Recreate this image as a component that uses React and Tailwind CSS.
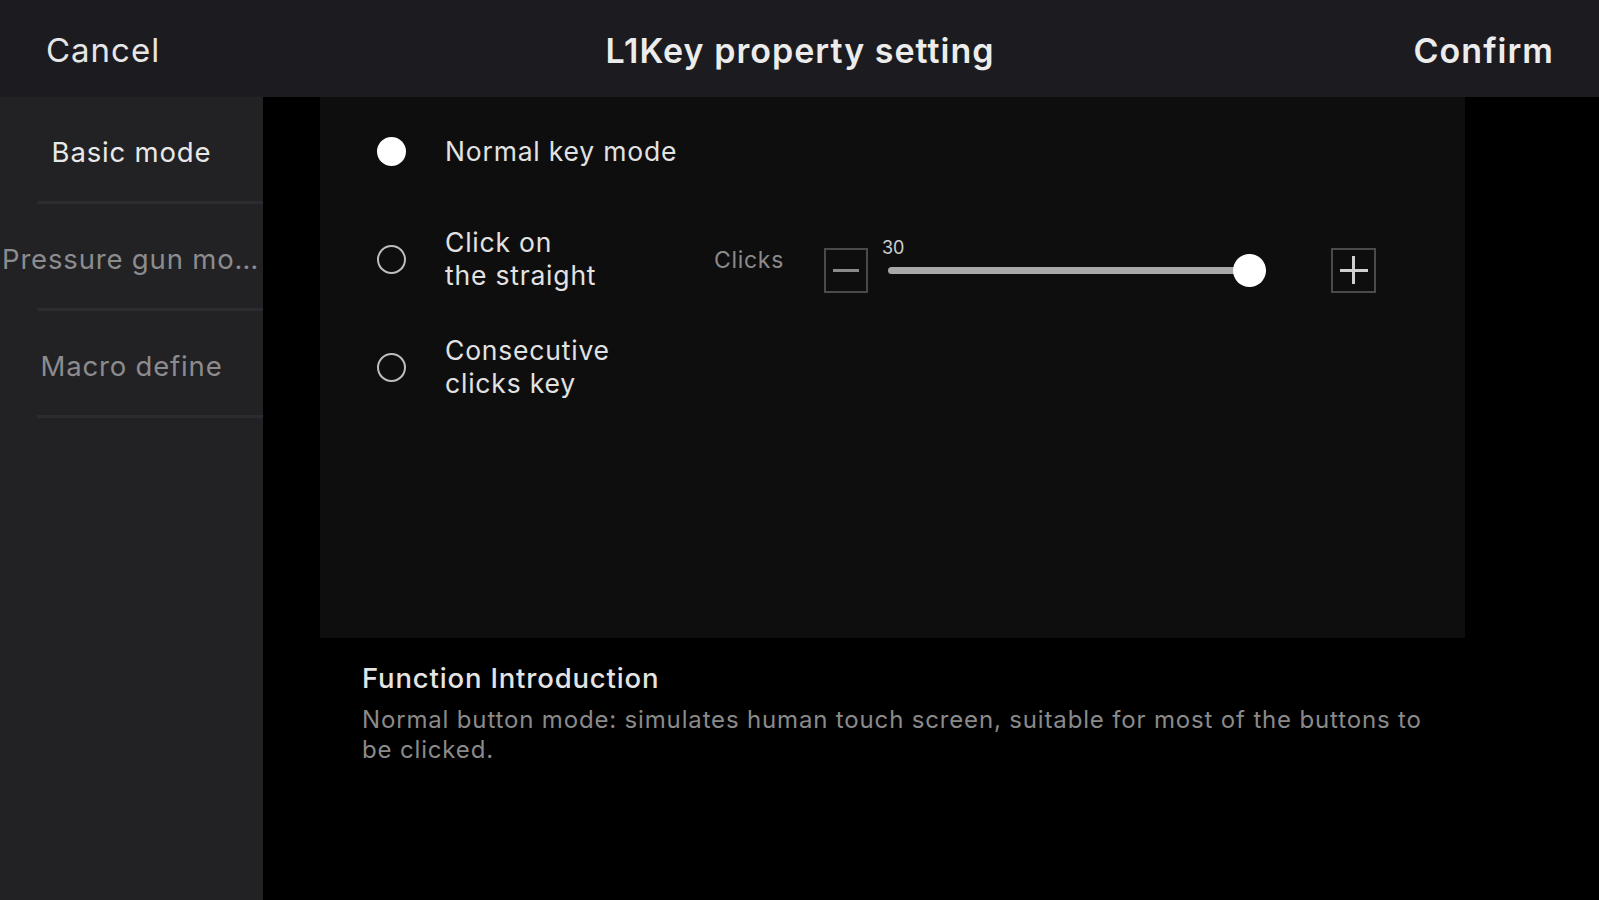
import React, { useState } from 'react';

const modes = [
    { id: 'normal', label: ['Normal key mode'] },
    { id: 'straight', label: ['Click on', 'the straight'] },
    { id: 'consecutive', label: ['Consecutive', 'clicks key'] },
];

const tabs = ['Basic mode', 'Pressure gun mode', 'Macro define'];

const Radio = ({ checked }) => (
    <div className="w-[30px] h-[30px] flex items-center justify-center shrink-0">
        {checked ? (
            <div className="w-[29px] h-[29px] rounded-full bg-white" />
        ) : (
            <div className="w-[29px] h-[29px] rounded-full border-[2.5px] border-[#bdbdbd]" />
        )}
    </div>
);

const App = () => {
    const [mode, setMode] = useState('normal');
    const [tab, setTab] = useState(0);
    const [clicks, setClicks] = useState(30);

    return (
        <div className="w-[1599px] h-[900px] bg-black flex flex-col overflow-hidden" style={{ fontFamily: 'Inter, "Noto Sans", sans-serif' }}>
            {/* Header */}
            <div className="h-[97px] shrink-0 bg-[#1c1c20] grid grid-cols-[1fr_auto_1fr] items-center pl-[46px] pr-[45px] pt-[4px]">
                <button className="justify-self-start text-[33px] text-[#e6e6e6] tracking-[0.03em]">Cancel</button>
                <h1 className="text-[34px] font-semibold text-[#ececec] tracking-[0.03em]">L1Key property setting</h1>
                <button className="justify-self-end text-[34px] font-semibold text-[#ececec] tracking-[0.03em]">Confirm</button>
            </div>

            <div className="flex flex-1 min-h-0">
                {/* Sidebar */}
                <div className="w-[263px] shrink-0 bg-[#222225] flex flex-col">
                    {tabs.map((t, i) => (
                        <button
                            key={t}
                            onClick={() => setTab(i)}
                            className="h-[107px] flex flex-col items-stretch"
                        >
                            <div className="flex-1 flex items-center justify-center px-[2px] pt-[7px]">
                                <span className={`block text-[27.5px] truncate tracking-[0.03em] ${tab === i ? 'text-[#e8e8e8]' : 'text-[#8c8c8e]'}`}>
                                    {t}
                                </span>
                            </div>
                            <div className="h-[3px] ml-[37px] bg-[#2c2c30]" />
                        </button>
                    ))}
                </div>

                {/* Main */}
                <div className="flex-1 flex flex-col">
                    <div className="ml-[57px] w-[1145px] h-[541px] bg-[#0e0e0e] flex flex-col">
                        {modes.map(m => (
                            <div key={m.id} className="h-[108px] flex items-center pl-[56px]">
                                <button onClick={() => setMode(m.id)} className="flex items-center">
                                    <Radio checked={mode === m.id} />
                                    <div className="ml-[39px] w-[269px] text-left text-[26.5px] leading-[33px] text-[#e2e2e2] tracking-[0.03em]">
                                        {m.label.map(l => <div key={l}>{l}</div>)}
                                    </div>
                                </button>

                                {m.id === 'straight' && (
                                    <div className="flex items-center mt-[22px]">
                                        <span className="text-[23px] text-[#8a8a8a] tracking-[0.03em] w-[110px] mb-[20px]">Clicks</span>
                                        <button
                                            onClick={() => setClicks(c => Math.max(1, c - 1))}
                                            className="w-[44px] h-[45px] border-2 border-[#4a4a4a] flex items-center justify-center"
                                        >
                                            <div className="w-[26px] h-[3px] bg-[#8a8a8a]" />
                                        </button>
                                        <div className="relative w-[378px] ml-[20px] mr-[65px] h-[34px] flex items-center">
                                            <span className="absolute left-[-6px] top-[-15px] text-[18px] leading-[20px] text-[#cfcfcf]">{clicks}</span>
                                            <div className="w-full h-[7px] rounded-full bg-[#a8a8a8]" />
                                            <div className="absolute right-[0px] w-[33px] h-[33px] rounded-full bg-white" />
                                        </div>
                                        <button
                                            onClick={() => setClicks(c => Math.min(30, c + 1))}
                                            className="w-[45px] h-[45px] border-2 border-[#4a4a4a] flex items-center justify-center relative"
                                        >
                                            <div className="w-[28px] h-[3px] bg-[#d0d0d0]" />
                                            <div className="absolute w-[3px] h-[28px] bg-[#d0d0d0]" />
                                        </button>
                                    </div>
                                )}
                            </div>
                        ))}
                    </div>

                    <div className="pl-[99px] pt-[20px]">
                        <h2 className="text-[27.5px] font-medium text-[#e4e4e4] tracking-[0.03em]">Function Introduction</h2>
                        <p className="mt-[6px] w-[1090px] text-[24px] leading-[30px] text-[#8a8a8a] tracking-[0.035em]">
                            Normal button mode: simulates human touch screen, suitable for most of the buttons to be clicked.
                        </p>
                    </div>
                </div>
            </div>
        </div>
    );
};

export default App;
